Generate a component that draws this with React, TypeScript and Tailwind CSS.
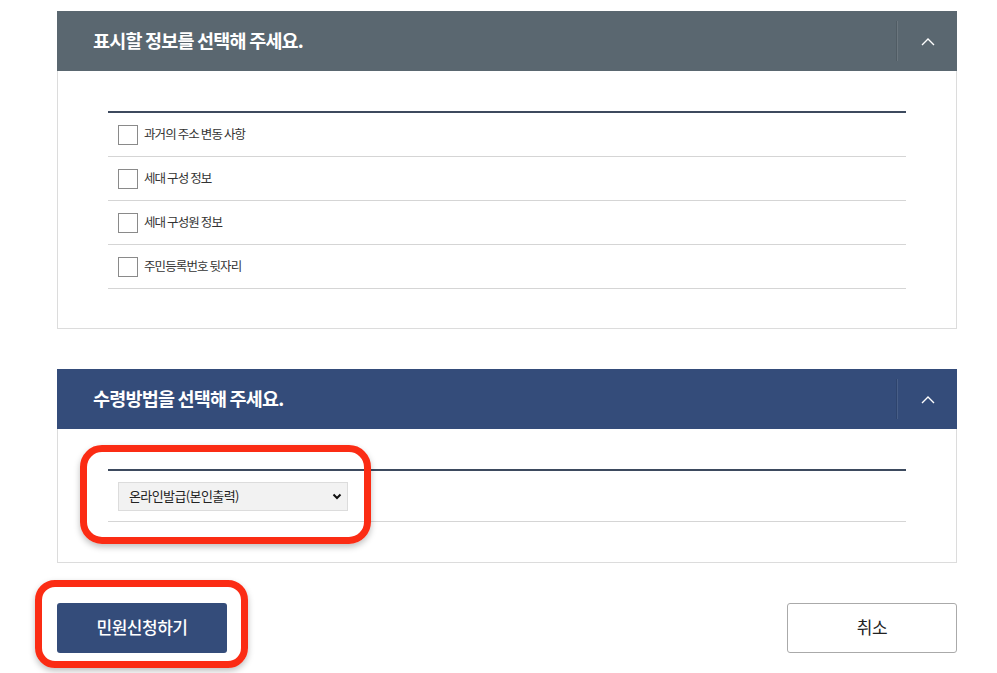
import React from 'react';

const font = { fontFamily: '"Noto Sans CJK KR", "Noto Sans", sans-serif' };

function ChevronUp() {
  return (
    <svg width="14" height="9" viewBox="0 0 14 9" fill="none">
      <path d="M1 8L7 2L13 8" stroke="white" strokeWidth="1.4" />
    </svg>
  );
}

function PanelHeader({ title, tone }: { title: string; tone: 'gray' | 'navy' }) {
  const bg = tone === 'gray' ? 'bg-[#5a6770]' : 'bg-[#344c7a]';
  return (
    <div className={`flex h-[60px] items-stretch ${bg}`}>
      <h3 className="flex flex-1 items-center pl-9 text-[18.5px] font-bold tracking-[-0.8px] text-white">
        {title}
      </h3>
      <div className="my-[10px] w-px bg-black/10" />
      <div className="my-[10px] w-px bg-white/10" />
      <button type="button" className="flex w-[59px] items-center justify-center" aria-label="접기">
        <ChevronUp />
      </button>
    </div>
  );
}

const items = ['과거의 주소 변동 사항', '세대 구성 정보', '세대 구성원 정보', '주민등록번호 뒷자리'];

export default function App() {
  return (
    <div className="min-h-[673px] bg-white pt-[11px]" style={font}>
      <div className="mx-[57px] w-[900px]">
        <section>
          <PanelHeader title="표시할 정보를 선택해 주세요." tone="gray" />
          <div className="border border-t-0 border-[#dcdcdc] px-[50px] pt-10 pb-[39px]">
            <ul className="border-t-2 border-[#3d4a5e]">
              {items.map((label) => (
                <li key={label} className="flex h-[44px] items-center gap-[6px] border-b border-[#d5d5d5] pl-[10px]">
                  <span className="h-[20px] w-[20px] border border-[#8a8a8a] bg-white" />
                  <span className="text-[12.5px] tracking-[-0.9px] text-[#333]">{label}</span>
                </li>
              ))}
            </ul>
          </div>
        </section>

        <section className="mt-10">
          <PanelHeader title="수령방법을 선택해 주세요." tone="navy" />
          <div className="border border-t-0 border-[#dcdcdc] px-[50px] pt-10 pb-10">
            <div className="border-t-2 border-[#3d4a5e]">
              <div className="relative flex h-[51px] items-center border-b border-[#d5d5d5] pl-[10px]">
                <div className="relative flex h-[29px] w-[230px] items-center border border-[#dcdcdc] bg-[#f2f2f2] pl-[10px] text-[13px] tracking-[-0.6px] text-[#222]">
                  온라인발급(본인출력)
                  <svg className="absolute right-[5px] top-[10px]" width="10" height="7" viewBox="0 0 10 7" fill="none">
                    <path d="M1.5 1.5L5 5L8.5 1.5" stroke="#111" strokeWidth="2" />
                  </svg>
                </div>
                <div className="pointer-events-none absolute left-[-28px] top-[-26px] h-[99px] w-[291px] rounded-[22px] border-[7px] border-[#fb2c14] shadow-[0_3px_6px_rgba(0,0,0,0.25)]" />
              </div>
            </div>
          </div>
        </section>

        <div className="mt-10 flex justify-between">
          <div className="relative">
            <button type="button" className="h-[50px] w-[170px] rounded-[3px] bg-[#344c7a] pb-[3px] text-[17px] font-medium tracking-[-0.5px] text-white">
              민원신청하기
            </button>
            <div className="pointer-events-none absolute left-[-22px] top-[-23px] h-[88px] w-[213px] rounded-[20px] border-[7px] border-[#fb2c14] shadow-[0_3px_6px_rgba(0,0,0,0.25)]" />
          </div>
          <button type="button" className="h-[50px] w-[170px] rounded-[3px] border border-[#aaa] bg-white pb-[3px] text-[17px] tracking-[-0.5px] text-[#222]">
            취소
          </button>
        </div>
      </div>
    </div>
  );
}
